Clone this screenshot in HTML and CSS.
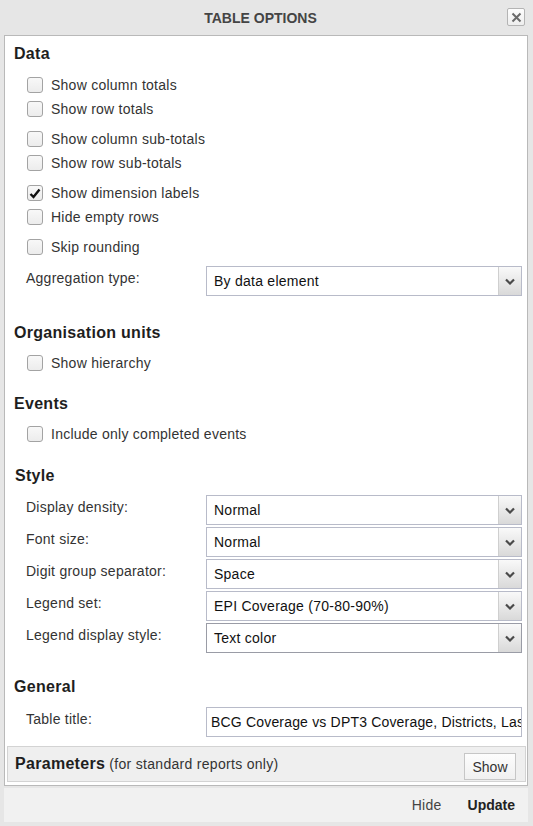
FILE: index.html
```html
<!DOCTYPE html>
<html>
<head>
<meta charset="utf-8">
<title>Table options</title>
<link rel="stylesheet" href="styles.css">
</head>
<body>
<div class="titlebar">
  <span class="title">TABLE OPTIONS</span>
  <span class="close"><svg width="11" height="11" viewBox="0 0 11 11"><path d="M1.5 1.5 L9.5 9.5 M9.5 1.5 L1.5 9.5" stroke="#6a6a6a" stroke-width="2" fill="none"/></svg></span>
</div>
<div class="panel">
  <div class="h first">Data</div>
  <div class="group g-first">
    <div class="check"><span class="box"></span>Show column totals</div>
    <div class="check"><span class="box"></span>Show row totals</div>
  </div>
  <div class="group">
    <div class="check"><span class="box"></span>Show column sub-totals</div>
    <div class="check"><span class="box"></span>Show row sub-totals</div>
  </div>
  <div class="group">
    <div class="check"><span class="box checked"><svg width="12" height="11" viewBox="0 0 12 11"><path d="M1.5 6 L4.5 9 L10.5 1.5" stroke="#111" stroke-width="2.4" fill="none"/></svg></span>Show dimension labels</div>
    <div class="check"><span class="box"></span>Hide empty rows</div>
  </div>
  <div class="group">
    <div class="check"><span class="box"></span>Skip rounding</div>
  </div>
  <div class="field agg">
    <span class="lbl">Aggregation type:</span>
    <div class="select"><span class="val">By data element</span><span class="arrow"><svg width="10" height="7" viewBox="0 0 10 7"><path d="M1 1.5 L5 5.5 L9 1.5" stroke="#4a4a4a" stroke-width="2.2" fill="none"/></svg></span></div>
  </div>

  <div class="h sec-org">Organisation units</div>
  <div class="group g-first">
    <div class="check"><span class="box"></span>Show hierarchy</div>
  </div>

  <div class="h sec-ev">Events</div>
  <div class="group g-first">
    <div class="check"><span class="box"></span>Include only completed events</div>
  </div>

  <div class="h sec-style">Style</div>
  <div class="fields">
    <div class="field">
      <span class="lbl">Display density:</span>
      <div class="select"><span class="val">Normal</span><span class="arrow"><svg width="10" height="7" viewBox="0 0 10 7"><path d="M1 1.5 L5 5.5 L9 1.5" stroke="#4a4a4a" stroke-width="2.2" fill="none"/></svg></span></div>
    </div>
    <div class="field">
      <span class="lbl">Font size:</span>
      <div class="select"><span class="val">Normal</span><span class="arrow"><svg width="10" height="7" viewBox="0 0 10 7"><path d="M1 1.5 L5 5.5 L9 1.5" stroke="#4a4a4a" stroke-width="2.2" fill="none"/></svg></span></div>
    </div>
    <div class="field">
      <span class="lbl">Digit group separator:</span>
      <div class="select"><span class="val">Space</span><span class="arrow"><svg width="10" height="7" viewBox="0 0 10 7"><path d="M1 1.5 L5 5.5 L9 1.5" stroke="#4a4a4a" stroke-width="2.2" fill="none"/></svg></span></div>
    </div>
    <div class="field">
      <span class="lbl">Legend set:</span>
      <div class="select"><span class="val">EPI Coverage (70-80-90%)</span><span class="arrow"><svg width="10" height="7" viewBox="0 0 10 7"><path d="M1 1.5 L5 5.5 L9 1.5" stroke="#4a4a4a" stroke-width="2.2" fill="none"/></svg></span></div>
    </div>
    <div class="field">
      <span class="lbl">Legend display style:</span>
      <div class="select dark"><span class="val">Text color</span><span class="arrow"><svg width="10" height="7" viewBox="0 0 10 7"><path d="M1 1.5 L5 5.5 L9 1.5" stroke="#4a4a4a" stroke-width="2.2" fill="none"/></svg></span></div>
    </div>
  </div>

  <div class="h sec-gen">General</div>
  <div class="field title-field">
    <span class="lbl">Table title:</span>
    <div class="input"><span class="val">BCG Coverage vs DPT3 Coverage, Districts, Last 12 months</span></div>
  </div>

  <div class="params">
    <div class="ptext"><span class="pbold">Parameters</span> (for standard reports only)</div>
    <span class="btn">Show</span>
  </div>
</div>
<div class="footer">
  <span class="hide">Hide</span>
  <span class="update">Update</span>
</div>
</body>
</html>
```

FILE: styles.css
```css
* { box-sizing: border-box; }
html, body { margin: 0; padding: 0; }
body {
  width: 533px;
  height: 826px;
  overflow: hidden;
  background: #e6e6e6;
  font-family: "Liberation Sans", Arial, sans-serif;
  font-size: 14px;
  letter-spacing: 0.25px;
  color: #222;
}
.titlebar {
  position: relative;
  height: 35px;
  display: flex;
  align-items: center;
  justify-content: center;
  padding-right: 12px;
}
.title {
  font-weight: bold;
  font-size: 14px;
  letter-spacing: 0;
  color: #444;
  padding-top: 1px;
}
.close {
  position: absolute;
  left: 507px;
  top: 8px;
  width: 18px;
  height: 18px;
  border: 1px solid #b4b4b4;
  border-radius: 2px;
  background: linear-gradient(#fdfdfd, #eeeeee);
  display: flex;
  align-items: center;
  justify-content: center;
}
.panel {
  margin: 0 5px 0 4px;
  height: 751px;
  background: #fff;
  border: 1px solid #b9b9b9;
  padding-top: 9px;
}
.h {
  font-size: 16px;
  font-weight: bold;
  letter-spacing: 0.3px;
  line-height: 18px;
  padding-left: 9px;
  color: #1e1e1e;
}
.sec-org { margin-top: 28px; }
.sec-ev { margin-top: 20px; }
.sec-style { margin-top: 21px; padding-left: 10px; }
.sec-gen { margin-top: 25px; }
.group { margin-top: 6px; }
.group.g-first { margin-top: 10px; }
.sec-org + .group, .sec-ev + .group { margin-top: 9px; }
.check {
  height: 24px;
  display: flex;
  align-items: center;
  padding-left: 22px;
  color: #333;
}
.box {
  width: 16px;
  height: 16px;
  border: 1px solid #a3a3a3;
  border-radius: 3px;
  background: linear-gradient(#f8f8f8, #ececec);
  margin-right: 8px;
  display: flex;
  align-items: center;
  justify-content: center;
  flex: none;
}
.field {
  display: flex;
  align-items: center;
  padding-left: 21px;
  padding-right: 5px;
  height: 30px;
}
.agg { margin-top: 7px; }
.lbl {
  width: 180px;
  flex: none;
  color: #333;
  margin-bottom: 6px;
}
.fields {
  margin-top: 10px;
  display: flex;
  flex-direction: column;
  gap: 2px;
}
.select {
  flex: 1;
  height: 30px;
  border: 1px solid #b8bbc9;
  background: #fff;
  display: flex;
  align-items: stretch;
}
.select.dark { border-color: #9a9ca6; }
.val {
  flex: 1;
  padding-left: 7px;
  display: flex;
  align-items: center;
  color: #111;
  white-space: nowrap;
  overflow: hidden;
}
.arrow {
  width: 23px;
  flex: none;
  border-left: 1px solid #cfcfcf;
  background: linear-gradient(#f9f9f9, #d9d9d9);
  display: flex;
  align-items: center;
  justify-content: center;
}
.title-field { margin-top: 11px; }
.input {
  flex: 1;
  height: 30px;
  border: 1px solid #b8bbc9;
  display: flex;
  overflow: hidden;
}
.input .val { padding-left: 4px; letter-spacing: 0.18px; }
.params {
  margin: 9px 1px 0 2px;
  height: 36px;
  background: #efefef;
  border: 1px solid #d3d3d3;
  display: flex;
  align-items: center;
  justify-content: space-between;
  padding: 0 9px 0 7px;
}
.ptext { color: #333; letter-spacing: 0.3px; }
.pbold { font-weight: bold; font-size: 16px; color: #1e1e1e; }
.btn {
  width: 52px;
  height: 27px;
  margin-top: 4px;
  border: 1px solid #c6c6c6;
  background: linear-gradient(#fdfdfd, #f0f0f0);
  display: flex;
  align-items: center;
  justify-content: center;
  color: #333;
  padding-top: 2px;
  letter-spacing: 0;
}
.footer {
  margin: 2px 5px 0 4px;
  height: 34px;
  background: #f1f1f1;
  display: flex;
  align-items: center;
  justify-content: flex-end;
  padding-right: 13px;
  gap: 26px;
}
.hide { color: #444; }
.update { font-weight: bold; color: #222; letter-spacing: 0; }
```
